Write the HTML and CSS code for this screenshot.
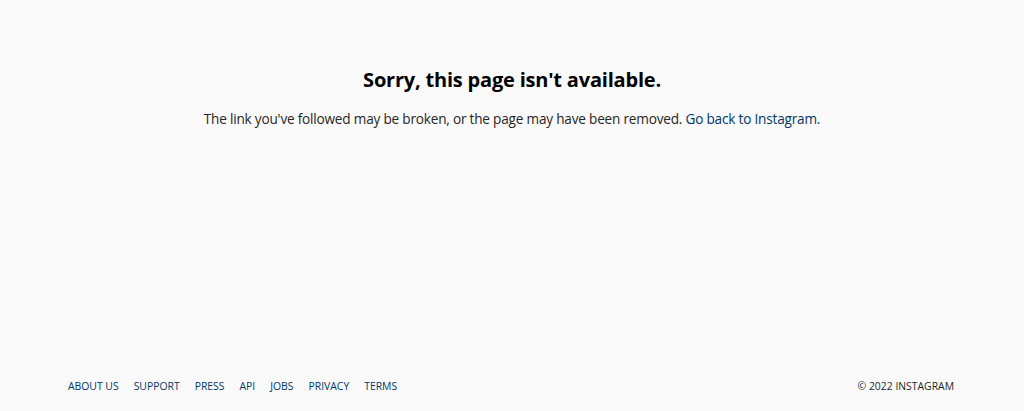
FILE: index.html
```html
<!DOCTYPE html>
<html lang="en">
<head>
<meta charset="utf-8">
<title>Page not found • Instagram</title>
<link rel="stylesheet" href="styles.css">
</head>
<body>
<div class="page">
  <main class="main">
    <h2 class="title">Sorry, this page isn't available.</h2>
    <p class="desc">The link you've followed may be broken, or the page may have been removed. <a href="#" class="link">Go back to Instagram.</a></p>
  </main>
  <footer class="footer">
    <nav class="footer-nav">
      <a href="#">About Us</a>
      <a href="#">Support</a>
      <a href="#">Press</a>
      <a href="#">API</a>
      <a href="#">Jobs</a>
      <a href="#">Privacy</a>
      <a href="#">Terms</a>
    </nav>
    <span class="copyright">© 2022 Instagram</span>
  </footer>
</div>
</body>
</html>
```
FILE: styles.css
```css
html, body {
  margin: 0;
  padding: 0;
  background: #fafafa;
  height: 100%;
}
body {
  font-family: "Open Sans", "Noto Sans", "Liberation Sans", sans-serif;
  color: #262626;
}
.page {
  display: flex;
  flex-direction: column;
  min-height: 411px;
  height: 100%;
}
.main {
  flex: 1;
  display: flex;
  flex-direction: column;
  align-items: center;
  padding-top: 64px;
}
.title {
  margin: 0;
  font-size: 20px;
  font-weight: 700;
  line-height: 32px;
  color: #000;
  letter-spacing: -0.2px;
}
.desc {
  margin: 12px 0 0;
  font-size: 13.6px;
  line-height: 22px;
  color: #262626;
  letter-spacing: -0.2px;
}
.link {
  color: #00376b;
  text-decoration: none;
}
.footer {
  display: flex;
  justify-content: space-between;
  align-items: center;
  padding: 0 70px 6px 68px;
  height: 38px;
  font-size: 10.4px;
  text-transform: uppercase;
}
.footer-nav {
  display: flex;
  gap: 15px;
}
.footer-nav a {
  color: #00376b;
  text-decoration: none;
}
.copyright {
  color: #262626;
}
```
